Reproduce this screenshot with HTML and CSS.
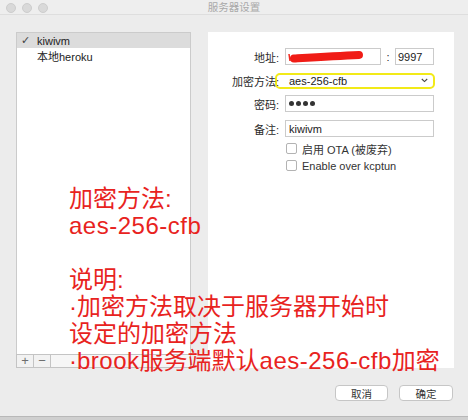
FILE: index.html
```html
<!DOCTYPE html>
<html lang="zh">
<head>
<meta charset="utf-8">
<title>服务器设置</title>
<link rel="stylesheet" href="styles.css">
</head>
<body>
<div class="window">
  <div class="titlebar">
    <div class="lights"><span class="light"></span><span class="light"></span><span class="light"></span></div>
    <div class="title">服务器设置</div>
    <div></div>
  </div>
  <div class="main">
    <div class="sidebar">
      <div class="list">
        <div class="item selected"><span class="check">✓</span><span>kiwivm</span></div>
        <div class="item"><span class="check"></span><span>本地heroku</span></div>
      </div>
      <div class="list-bar">
        <span class="bar-btn">+</span><span class="bar-btn">−</span><span class="bar-rest"></span>
      </div>
    </div>
    <div class="panel">
      <div class="row r1">
        <span class="label">地址:</span>
        <div class="input addr">
          <svg class="scribble" width="96" height="17" viewBox="0 0 96 17">
            <path d="M3 5 L4 12" stroke="#f0281f" stroke-width="1.5" fill="none"/>
            <path d="M8 9.5 C 25 8.5, 50 7, 73 6" stroke="#f01c16" stroke-width="8" stroke-linecap="round" fill="none"/>
          </svg>
        </div>
        <span class="colon">:</span>
        <div class="input port">9997</div>
      </div>
      <div class="row r2">
        <span class="label over">加密方法:</span>
        <div class="select"><span>aes-256-cfb</span>
          <svg class="chev" width="7" height="5" viewBox="0 0 7 5"><polyline points="0.8,1 3.5,3.6 6.2,1" fill="none" stroke="#444" stroke-width="1.1"/></svg>
        </div>
      </div>
      <div class="row r3">
        <span class="label">密码:</span>
        <div class="input wide dots"><i></i><i></i><i></i><i></i></div>
      </div>
      <div class="row r4">
        <span class="label">备注:</span>
        <div class="input wide">kiwivm</div>
      </div>
      <div class="row chk c1"><span class="box"></span><span>启用 OTA (被废弃)</span></div>
      <div class="row chk c2"><span class="box"></span><span>Enable over kcptun</span></div>
    </div>
  </div>
  <div class="footer">
    <span class="btn">取消</span>
    <span class="btn ok">确定</span>
  </div>
  <div class="note">
    <div>加密方法:</div>
    <div><span class="lat">aes-256-cfb</span></div>
    <div>&nbsp;</div>
    <div>说明:</div>
    <div>·加密方法取决于服务器开始时</div>
    <div>设定的加密方法</div>
    <div>·<span class="lat">brook</span>服务端默认<span class="lat">aes-256-cfb</span>加密</div>
  </div>
</div>
</body>
</html>
```

FILE: styles.css
```css
html, body {
  margin: 0;
  padding: 0;
}
body {
  width: 468px;
  height: 420px;
  background: #cfcfcf;
  font-family: "Liberation Sans", "Noto Sans CJK SC", sans-serif;
  font-size: 11px;
  color: #2a2a2a;
  overflow: hidden;
}
.window {
  position: relative;
  width: 468px;
  height: 416px;
  background: #ececec;
  border-bottom: 1px solid #b8b8b8;
  display: flex;
  flex-direction: column;
}
.titlebar {
  height: 15px;
  display: grid;
  grid-template-columns: 1fr auto 1fr;
  align-items: center;
  background: #eeeeee;
  border-bottom: 1px solid #dedede;
  box-sizing: border-box;
}
.lights {
  display: flex;
  gap: 6px;
  padding-left: 6px;
}
.light {
  width: 10px;
  height: 10px;
  border-radius: 50%;
  background: #d9d9d9;
  box-sizing: border-box;
  border: 1px solid #cdcdcd;
}
.title {
  font-size: 10.5px;
  color: #a9a9a9;
  line-height: 15px;
}
.main {
  display: flex;
  gap: 17px;
  padding: 17px 14px 0 16px;
  height: 336px;
}
.sidebar {
  width: 175px;
  display: flex;
  flex-direction: column;
}
.list {
  flex: 1;
  background: #fff;
  border: 1px solid #cbcbcb;
  border-bottom: none;
}
.item {
  height: 16px;
  display: flex;
  align-items: center;
  font-size: 11px;
  color: #222;
}
.item.selected {
  background: #dcdcdc;
  height: 15px;
}
.check {
  width: 16px;
  padding-left: 4px;
  color: #444;
  font-size: 11px;
  font-family: "DejaVu Sans", sans-serif;
}
.list-bar {
  height: 14px;
  display: flex;
  border: 1px solid #c4c4c4;
  box-sizing: border-box;
  background: #f6f6f6;
}
.bar-btn {
  width: 16px;
  display: flex;
  align-items: center;
  justify-content: center;
  color: #6e6e6e;
  font-size: 13px;
  line-height: 12px;
  background: #f2f2f2;
  border-right: 1px solid #c4c4c4;
}
.bar-rest {
  flex: 1;
}
.panel {
  width: 246px;
  background: #fff;
  padding-top: 16px;
  box-sizing: border-box;
}
.row {
  display: flex;
  align-items: center;
  height: 17px;
}
.r2 { margin-top: 7px; }
.r3 { margin-top: 6px; }
.r4 { margin-top: 8px; }
.c1 { margin-top: 3px; }
.label {
  width: 71px;
  text-align: right;
  margin-right: 6px;
  color: #2a2a2a;
}
.label.over {
  position: relative;
  z-index: 1;
  margin-right: 4px;
}
.input {
  height: 17px;
  box-sizing: border-box;
  border: 1px solid #cbcbcb;
  background: #fff;
  padding-left: 3px;
  display: flex;
  align-items: center;
  color: #222;
}
.addr {
  width: 96px;
  position: relative;
  padding: 0;
}
.scribble {
  position: absolute;
  left: 0;
  top: 0;
}
.colon {
  width: 14px;
  text-align: center;
}
.port {
  width: 39px;
  padding-left: 2px;
}
.wide {
  width: 149px;
}
.select {
  margin-left: -8px;
  width: 160px;
  height: 16px;
  box-sizing: border-box;
  border: 2px solid #f2ea18;
  border-radius: 5px;
  background: #fff;
  display: flex;
  align-items: center;
  justify-content: space-between;
  padding: 0 5px 0 12px;
  color: #222;
}
.dots {
  gap: 2px;
}
.dots i {
  width: 5px;
  height: 5px;
  border-radius: 50%;
  background: #333;
  display: block;
}
.chk {
  padding-left: 78px;
  gap: 5px;
  color: #333;
}
.box {
  width: 9px;
  height: 9px;
  border: 1px solid #b3b3b3;
  border-radius: 2px;
  background: #fff;
}
.footer {
  display: flex;
  justify-content: flex-end;
  gap: 11px;
  padding: 17px 15px 0 0;
}
.btn {
  width: 53px;
  height: 16px;
  box-sizing: border-box;
  border: 1px solid #c6c6c6;
  border-radius: 4px;
  background: #fff;
  display: flex;
  align-items: center;
  justify-content: center;
  font-size: 10.5px;
  color: #333;
}
.btn.ok {
  width: 54px;
}
.note {
  position: absolute;
  left: 69px;
  top: 185px;
  font-size: 24px;
  line-height: 27px;
  color: #e8231e;
  font-family: "Liberation Sans", "Noto Sans CJK SC", sans-serif;
  white-space: nowrap;
}
.lat {
  letter-spacing: 0.5px;
}
```
